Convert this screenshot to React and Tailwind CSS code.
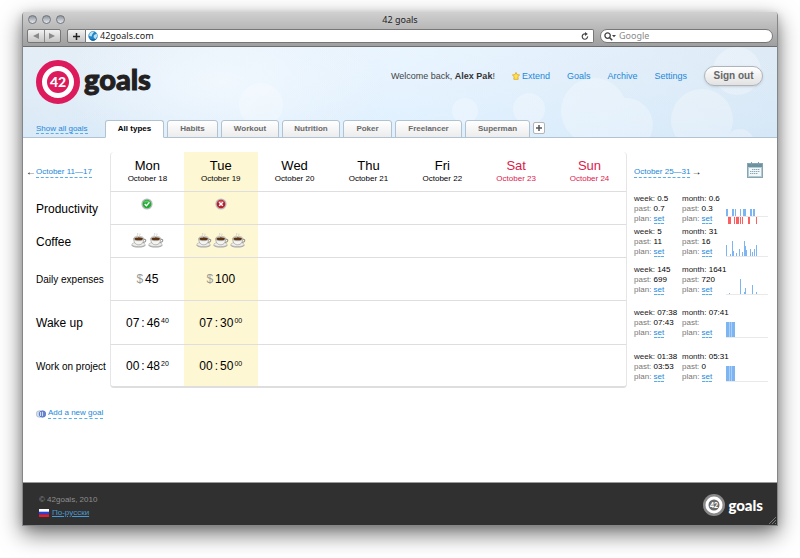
import React from "react";

const days = [
  ["Mon", "October 18"],
  ["Tue", "October 19"],
  ["Wed", "October 20"],
  ["Thu", "October 21"],
  ["Fri", "October 22"],
  ["Sat", "October 23"],
  ["Sun", "October 24"],
];

const tabs = [
  ["All types", "w-[59px]"],
  ["Habits", "w-[51px]"],
  ["Workout", "w-[58px]"],
  ["Nutrition", "w-[58px]"],
  ["Poker", "w-[49px]"],
  ["Freelancer", "w-[67px]"],
  ["Superman", "w-[65px]"],
];

function Link({ children }) {
  return (
    <a href="#" className="border-b border-dashed border-[#5aaee8] text-[#2488d8]">
      {children}
    </a>
  );
}

function Status({ ok }) {
  return (
    <svg className="h-3 w-3" viewBox="0 0 12 12" role="img" aria-label={ok ? "Done" : "Missed"}>
      <circle cx="6" cy="6" r="5.6" fill="#b9b9b9" />
      <circle cx="6" cy="6" r="4.3" fill={ok ? "#1fae32" : "#b81f2c"} />
      <path d="M2.6 4.8a3.6 3.6 0 0 1 6.8 0C7.5 4 4.5 4 2.6 4.8z" fill="#fff" opacity=".3" />
      {ok ? (
        <path d="M3.7 6.1l1.7 1.7 3-3.4" stroke="#fff" strokeWidth="1.4" fill="none" />
      ) : (
        <path d="M4.200 4.200l3.600 3.600M7.800 4.200L4.200 7.800" stroke="#fff" strokeWidth="1.500" fill="none" />
      )}
    </svg>
  );
}

function Cup() {
  return (
    <svg className="h-4 w-4" viewBox="0 0 15 16" aria-hidden="true">
      <ellipse cx="7" cy="13.200" rx="6.800" ry="2.400" fill="#a9a9a7" />
      <ellipse cx="7" cy="12.400" rx="6.600" ry="2.200" fill="#efefed" stroke="#a9a9a7" strokeWidth=".6" />
      <path d="M12 7.500c3-.8 3.300 2.500-.8 3" fill="none" stroke="#9a9996" strokeWidth="1.100" />
      <path d="M2.200 6.600c0 3.600 1.600 6.200 5 6.200s5-2.600 5-6.200z" fill="#f4f4f2" stroke="#999895" strokeWidth=".7" />
      <ellipse cx="7.200" cy="6.600" rx="5" ry="2.100" fill="#e4e3df" stroke="#8c8a86" strokeWidth=".5" />
      <ellipse cx="7.200" cy="6.800" rx="4.200" ry="1.500" fill="#5d3413" />
      <path d="M6 5.300c-2-1.400 1.200-2 0-4.300M8.300 5c-1.200-1.400.8-2 .1-3.300" fill="none" stroke="#cfcfcd" strokeWidth="1" />
    </svg>
  );
}

function Cups({ count }) {
  return (
    <div className="flex justify-center gap-px" role="img" aria-label={count + " cups"}>
      {Array.from({ length: count }, (_, i) => (
        <Cup key={i} />
      ))}
    </div>
  );
}

function Money({ value }) {
  return (
    <span>
      <span className="text-[#9a9a96]">$</span>
      <span className="pl-[2px]">{value}</span>
    </span>
  );
}

function Time({ h, m, s }) {
  return (
    <div className="flex justify-center">
      <span>{h}</span>
      <span className="px-[2px]">:</span>
      <span>{m}</span>
      <span className="pl-px text-[7px] leading-[12px]">{s}</span>
    </div>
  );
}

// Each bar is [x, y, width, height] in a 42x16 box.
const charts = [
  {
    base: 8,
    bars: [[0, 1, 1, 7], [1, 1, 1, 7], [6, 1, 2, 7], [9, 1, 1, 7], [14, 1, 1, 7], [17, 1, 2, 7], [19, 1, 1, 7], [24, 1, 2, 7], [27, 1, 2, 7]],
    red: [[2, 9, 2, 7], [4, 9, 1, 7], [8, 9, 1, 7], [10, 9, 2, 7], [12, 9, 1, 7], [14, 9, 1, 7], [16, 9, 1, 7], [22, 9, 2, 7], [30, 9, 1, 7]],
  },
  {
    base: 15,
    bars: [[0, 4, 1, 11], [4, 13, 1, 2], [6, 0, 1, 15], [7, 10, 1, 5], [10, 12, 1, 3], [13, 8, 1, 7], [16, 11, 1, 4], [18, 0, 1, 15], [19, 5, 1, 10], [20, 9, 1, 6], [24, 8, 1, 7], [26, 11, 1, 4], [28, 8, 1, 7], [30, 4, 1, 11]],
  },
  { base: 15, bars: [[3, 14, 1, 1], [14, 0, 1, 15], [18, 13, 1, 2], [19, 9, 1, 6], [26, 6, 1, 9], [30, 13, 1, 2]] },
  { base: 15, bars: [[0, 0, 1, 15], [1, 0, 1, 15], [2, 0, 1, 15], [4, 0, 1, 15], [6, 0, 2, 15], [8, 0, 1, 15]], solid: true },
  { base: 15, bars: [[0, 0, 1, 15], [1, 0, 1, 15], [2, 0, 1, 15], [4, 0, 1, 15], [6, 0, 2, 15], [8, 0, 1, 15]], solid: true },
];

function Chart({ data }) {
  return (
    <svg className="h-4 w-[42px] shrink-0" viewBox="0 0 42 16" shapeRendering="crispEdges" aria-hidden="true">
      <rect x="0" y={data.base} width="42" height="1" fill="#e9e9e9" />
      {data.solid && <rect x="0" y="0" width="9" height="15" fill="#a9cff8" />}
      {data.bars.map(([x, y, w, h], i) => (
        <rect key={i} x={x} y={y} width={w} height={h} fill="#7db5f2" />
      ))}
      {(data.red || []).map(([x, y, w, h], i) => (
        <rect key={i} x={x} y={y} width={w} height={h} fill="#fb5f5f" />
      ))}
    </svg>
  );
}

const goals = [
  {
    name: "Productivity",
    size: "h-[33px] text-[12px]",
    pad: "pb-[8px]",
    cells: [<Status ok />, <Status />],
    week: ["0.5", "0.7"],
    month: ["0.6", "0.3"],
  },
  {
    name: "Coffee",
    size: "h-[33px] text-[12px]",
    pad: "pb-[2px]",
    cells: [<Cups count={2} />, <Cups count={3} />],
    week: ["5", "11"],
    month: ["31", "16"],
  },
  {
    name: "Daily expenses",
    size: "h-[43px] text-[10px]",
    pad: "",
    cells: [<Money value="45" />, <Money value="100" />],
    week: ["145", "699"],
    month: ["1641", "720"],
  },
  {
    name: "Wake up",
    size: "h-[44px] text-[12px]",
    pad: "",
    cells: [<Time h="07" m="46" s="40" />, <Time h="07" m="30" s="00" />],
    week: ["07:38", "07:43"],
    month: ["07:41", ""],
  },
  {
    name: "Work on project",
    size: "h-[43px] text-[10px]",
    pad: "",
    cells: [<Time h="00" m="48" s="20" />, <Time h="00" m="50" s="00" />],
    week: ["01:38", "03:53"],
    month: ["05:31", "0"],
  },
];

function Stats({ label, values }) {
  return (
    <div className="whitespace-nowrap text-[8px] leading-[10px] text-[#777]">
      <div className="text-[#222]">
        {label}: <span className="text-black">{values[0]}</span>
      </div>
      <div>
        past: <span className="text-black">{values[1]}</span>
      </div>
      <div>
        plan: <Link>set</Link>
      </div>
    </div>
  );
}

function Light() {
  return (
    <span className="h-[9px] w-[9px] rounded-full border border-[#70757d] bg-linear-to-b from-[#8f959e] to-[#e6e9ed]" />
  );
}

function Browser() {
  return (
    <div className="rounded-t-[3px] border-b border-[#6f6f6f] bg-linear-to-b from-[#d0d0d0] to-[#9f9f9f] px-1">
      <div className="grid h-[15px] grid-cols-3 items-center">
        <div className="flex gap-[5px] pl-px">
          <Light />
          <Light />
          <Light />
        </div>
        <h1 className="text-center font-['Noto_Sans',sans-serif] text-[9px] leading-[14px] text-[#222]">42 goals</h1>
      </div>
      <div className="flex h-[19px] items-center pb-[2px] pt-px">
        <div className="mr-[6px] flex h-[14px] w-[34px] shrink-0 divide-x divide-[#888] overflow-hidden rounded-[2px] border border-[#777] bg-linear-to-b from-[#f2f2f2] to-[#c4c4c4]">
          <button aria-label="Back" className="flex flex-1 items-center justify-center">
            <svg className="h-[6px] w-[6px]" viewBox="0 0 6 6"><path d="M6 0v6L0 3z" fill="#8a8a8a" /></svg>
          </button>
          <button aria-label="Forward" className="flex flex-1 items-center justify-center">
            <svg className="h-[6px] w-[6px]" viewBox="0 0 6 6"><path d="M0 0v6l6-3z" fill="#8a8a8a" /></svg>
          </button>
        </div>
        <button aria-label="Add bookmark" className="flex h-[14px] w-[19px] shrink-0 items-center justify-center rounded-l-[2px] border border-[#777] bg-linear-to-b from-[#f2f2f2] to-[#c4c4c4]">
          <svg className="h-[7px] w-[7px]" viewBox="0 0 7 7"><path d="M3.500 0v7M0 3.500h7" stroke="#222" strokeWidth="1.500" /></svg>
        </button>
        <div className="mr-[6px] flex h-[14px] min-w-0 flex-1 items-center rounded-r-[2px] border border-l-0 border-[#777] bg-white pl-[2px] pr-1">
          <svg className="h-[10px] w-[10px] shrink-0" viewBox="0 0 10 10" aria-hidden="true">
            <circle cx="5" cy="5" r="4.700" fill="#2384c4" />
            <path d="M1.500 2.500C3 .8 5 .5 6 1.200L4.500 3 3.500 5.500 1.200 5zM6 4l2.700-1.200.6 2.400-2 3L5.500 6z" fill="#b9e2f5" />
            <path d="M2 8.400a4.700 4.700 0 0 0 6 0z" fill="#0d4f8d" />
          </svg>
          <input aria-label="Address" defaultValue="42goals.com" className="min-w-0 flex-1 bg-transparent pl-[2px] font-['Noto_Sans',sans-serif] text-[9px] leading-[12px] text-[#222] outline-none" />
          <button aria-label="Reload">
            <svg className="h-[8px] w-[8px]" viewBox="0 0 8 8">
              <path d="M6.600 4.400A2.700 2.700 0 1 1 4.500 1.900" fill="none" stroke="#444" strokeWidth="1.200" />
              <path d="M4 0l2.800 2L4 4z" fill="#444" />
            </svg>
          </button>
        </div>
        <div className="flex h-[14px] w-[173px] shrink-0 items-center rounded-full border border-[#777] bg-white pl-[3px]">
          <svg className="h-[9px] w-[12px]" viewBox="0 0 12 9" aria-hidden="true">
            <circle cx="3.600" cy="3.600" r="2.700" fill="none" stroke="#444" strokeWidth="1.300" />
            <path d="M5.500 5.500l2.700 2.800" stroke="#444" strokeWidth="1.600" />
            <path d="M8 3h4l-2 2.300z" fill="#444" />
          </svg>
          <input aria-label="Search" placeholder="Google" className="min-w-0 flex-1 bg-transparent pl-[3px] font-['Noto_Sans',sans-serif] text-[9px] leading-[12px] outline-none placeholder:text-[#8a8a8a]" />
        </div>
      </div>
    </div>
  );
}

function Header() {
  return (
    <header className="relative border-b border-[#b1c2d0] bg-linear-to-r from-[#dde9f4] via-[#e4f2ff] to-[#d6e6f4]">
      <svg className="absolute inset-y-0 right-0 h-full w-[754px]" viewBox="0 0 754 90" preserveAspectRatio="xMaxYMin slice" aria-hidden="true">
        <defs>
          <linearGradient id="glow" x1="0" y1="0" x2="0" y2="1">
            <stop offset="0" stopColor="#fff" stopOpacity=".2" />
            <stop offset="1" stopColor="#d4ebff" stopOpacity=".3" />
          </linearGradient>
          <radialGradient id="shine">
            <stop offset="0" stopColor="#f4faff" stopOpacity=".8" />
            <stop offset="1" stopColor="#f4faff" stopOpacity="0" />
          </radialGradient>
        </defs>
        <rect x="0" y="0" width="754" height="90" fill="url(#glow)" />
        <ellipse cx="200" cy="35" rx="160" ry="75" fill="url(#shine)" />
        <g fill="#fff" opacity=".28">
          <circle cx="571" cy="64" r="33" />
          <circle cx="603" cy="78" r="27" />
          <circle cx="679" cy="73" r="31" />
          <circle cx="714" cy="24" r="24" />
          <circle cx="717" cy="96" r="14" />
          <circle cx="506" cy="62" r="16" />
          <circle cx="442" cy="64" r="13" />
          <circle cx="238" cy="58" r="22" />
        </g>
      </svg>
      <div className="relative flex h-[73px] items-start justify-between pl-[13px] pr-[14px] pt-[13px]">
        <a href="#" className="flex items-center">
          <svg className="h-11 w-11" viewBox="0 0 44 44" aria-hidden="true">
            <circle cx="22" cy="22" r="19" fill="#fff" stroke="#dc1a5c" strokeWidth="6" />
            <circle cx="22" cy="22" r="11" fill="#dc1a5c" />
            <text x="22" y="27" textAnchor="middle" fontFamily="Lato, sans-serif" fontWeight="900" fontSize="14" fill="#fff">42</text>
          </svg>
          <span className="pb-[7px] pl-[4px] font-['Lato',sans-serif] text-[29px] font-black leading-[36px] text-[#222021] [-webkit-text-stroke:1px_#222021]">goals</span>
        </a>
        <nav className="flex items-center gap-[17px] pt-[6px] text-[9px] leading-[20px] text-[#2488d8]">
          <span className="text-[#444]">
            Welcome back, <b className="text-[#333]">Alex Pak</b>!
          </span>
          <a href="#" className="flex items-center gap-[2px]">
            <svg className="h-[8px] w-[8px]" viewBox="0 0 8 8" aria-hidden="true">
              <path d="M4 .4l1.100 2.200 2.500.4-1.800 1.700.4 2.600H1.800l.4-2.600L.4 3l2.500-.4z" fill="#ffe252" stroke="#e0a21a" strokeWidth=".8" />
            </svg>
            Extend
          </a>
          <a href="#">Goals</a>
          <a href="#">Archive</a>
          <a href="#">Settings</a>
          <button className="h-[20px] w-[59px] rounded-full border border-[#aeb4ba] bg-linear-to-b from-white to-[#e2e2e2] text-[10px] font-bold leading-[18px] text-[#666] shadow-sm">
            Sign out
          </button>
        </nav>
      </div>
      <div className="relative -mb-px flex items-end pl-[13px]">
        <div className="w-[69px] pb-[4px] text-[8px] leading-[10px]">
          <Link>Show all goals</Link>
        </div>
        <div className="flex items-end gap-[3px]" role="tablist">
          {tabs.map(([name, width], i) => (
            <button
              key={name}
              role="tab"
              aria-selected={i === 0}
              className={
                "h-[18px] rounded-t-[3px] border text-[8px] font-bold leading-[16px] border-[#b1c2d0] " +
                width +
                (i === 0 ? " border-b-white bg-white text-black" : " bg-linear-to-b from-white to-[#ececec] text-[#6a6a6a]")
              }
            >
              {name}
            </button>
          ))}
          <button aria-label="Add type" className="mb-[4px] flex h-3 w-3 items-center justify-center rounded-[2px] border border-[#b4b4b4] bg-white">
            <svg className="h-[6px] w-[6px]" viewBox="0 0 6 6"><path d="M3 0v6M0 3h6" stroke="#555" strokeWidth="1.500" /></svg>
          </button>
        </div>
      </div>
    </header>
  );
}

function Calendar() {
  return (
    <svg className="h-4 w-4" viewBox="0 0 16 16" aria-hidden="true">
      <rect x=".5" y="1.500" width="15" height="14" fill="#b4cbd3" stroke="#86a5b0" />
      <rect x="1" y="2" width="14" height="3" fill="#6d929f" />
      <rect x="2" y="6" width="12" height="8" fill="#f2f8fa" />
      <path d="M5 7.500h8M3 9.500h10M3 11.500h8" stroke="#8aa9b4" strokeDasharray="1.400 .6" />
      <path d="M4.500 0v3M11.500 0v3" stroke="#7b9ca8" />
    </svg>
  );
}

function Board() {
  return (
    <table className="w-full table-fixed border-separate border-spacing-0 text-black">
      <colgroup>
        <col className="w-[87px]" />
        {days.map(([d]) => (
          <col key={d} />
        ))}
        <col className="w-[150px]" />
      </colgroup>
      <thead>
        <tr className="h-[40px]">
          <th className="whitespace-nowrap pl-[3px] text-left text-[8px] font-normal leading-[10px]">
            <div className="flex">
              <span className="w-[10px] text-[10px]">←</span>
              <Link>October 11—17</Link>
            </div>
          </th>
          {days.map(([d, date], i) => (
            <th
              key={d}
              className={
                "border-b border-[#dedede] pb-[2px] font-normal " +
                (i === 0 ? "rounded-tl-[4px] border-l border-l-[#e6e6e6] " : "") +
                (i === 6 ? "rounded-tr-[4px] border-r border-r-[#e6e6e6] " : "") +
                (i === 1 ? "bg-[#fef7d3] " : "") +
                (i > 4 ? "text-[#dc1a4c]" : "")
              }
            >
              <div className="text-[13px] leading-[16px]">{d}</div>
              <div className="text-[8px] leading-[10px]">{date}</div>
            </th>
          ))}
          <th className="pl-[7px] pr-[14px] text-[8px] font-normal leading-[10px]">
            <div className="flex items-center justify-between">
              <span className="flex gap-px">
                <Link>October 25—31</Link>
                <span className="text-[10px]">→</span>
              </span>
              <button aria-label="Calendar" className="pb-[4px]">
                <Calendar />
              </button>
            </div>
          </th>
        </tr>
      </thead>
      <tbody>
        {goals.map((g, r) => (
          <tr key={g.name}>
            <th className={"whitespace-nowrap p-0 pl-[13px] text-left font-normal leading-[16px] " + g.size}>{g.name}</th>
            {days.map(([d], i) => (
              <td
                key={d}
                className={
                  "border-[#dedede] p-0 text-center text-[12px] leading-[16px] " +
                  (r === 4 ? "border-b-2 " : "border-b ") +
                  (i === 0 ? "border-l border-l-[#e6e6e6] " : "") +
                  (i === 6 ? "border-r border-r-[#e6e6e6] " : "") +
                  (r === 4 && i === 0 ? "rounded-bl-[4px] " : "") +
                  (r === 4 && i === 6 ? "rounded-br-[4px] " : "") +
                  (i === 1 ? "bg-[#fef7d3] " : "") +
                  g.pad
                }
              >
                <div className="flex justify-center">{g.cells[i]}</div>
              </td>
            ))}
            <td className="p-0 pl-[7px]">
              <div className="grid grid-cols-[48px_44px_42px] items-end">
                <Stats label="week" values={g.week} />
                <Stats label="month" values={g.month} />
                <Chart data={charts[r]} />
              </div>
            </td>
          </tr>
        ))}
      </tbody>
    </table>
  );
}

function Footer() {
  return (
    <footer className="relative flex items-center justify-between border-t border-[#9a9a9a] bg-[#303030] pb-[7px] pl-4 pr-[14px] pt-[9px] text-[8px] text-[#8f8f8f]">
      <div>
        <div className="leading-[16px]">© 42goals, 2010</div>
        <a href="#" className="flex items-center gap-[3px] leading-[10px] text-[#4a9ad0] underline">
          <svg className="h-[8px] w-[10px]" viewBox="0 0 10 8" aria-hidden="true">
            <rect width="10" height="3" fill="#fff" />
            <rect y="2.700" width="10" height="2.800" fill="#2a3fd8" />
            <rect y="5.400" width="10" height="2.600" fill="#e31e2a" />
          </svg>
          По-русски
        </a>
      </div>
      <a href="#" className="flex items-center gap-[3px]">
        <svg className="h-[22px] w-[22px]" viewBox="0 0 22 22" aria-hidden="true">
          <circle cx="11" cy="11" r="11" fill="#8a8a8a" />
          <circle cx="11" cy="11" r="7" fill="#6b6b6b" stroke="#fff" strokeWidth="3" />
          <text x="11" y="13.500" textAnchor="middle" fontFamily="Lato, sans-serif" fontWeight="900" fontSize="7" fill="#fff">42</text>
        </svg>
        <span className="font-['Lato',sans-serif] text-[15px] font-black leading-[20px] text-white">goals</span>
      </a>
      <svg className="absolute bottom-px right-px h-[7px] w-[7px]" viewBox="0 0 7 7" aria-hidden="true">
        <path d="M0 7l7-7M3 7l4-4M6 7l1-1" stroke="#8d8d8d" strokeWidth=".8" />
      </svg>
    </footer>
  );
}

export default function App() {
  return (
    <div className="flex min-h-screen flex-col bg-white px-[22px] pb-8 pt-3 font-['Liberation_Sans',Arial,sans-serif]">
      <div className="flex flex-1 flex-col rounded-t-[4px] border-x border-b border-[#83878a] bg-white shadow-[0_8px_22px_rgba(0,0,0,0.55),0_2px_8px_rgba(0,0,0,0.15)]">
        <Browser />
        <Header />
        <main className="flex-1 pt-[14px]">
          <Board />
          <a href="#" className="mt-[20px] inline-flex items-center gap-[2px] pl-[13px] text-[8px] leading-[10px]">
            <svg className="h-[8px] w-[10px]" viewBox="0 0 10 8" aria-hidden="true">
              <circle cx="3.500" cy="4" r="3.300" fill="#d3dcea" stroke="#9fb0c8" strokeWidth=".6" />
              <circle cx="6.500" cy="4" r="3.300" fill="#6484d8" stroke="#4c68b8" strokeWidth=".6" />
              <path d="M4.500 2v4M6.500 1.800v4.400" stroke="#e9effc" strokeWidth=".8" />
            </svg>
            <span className="border-b border-dashed border-[#5aaee8] text-[#2488d8]">Add a new goal</span>
          </a>
        </main>
        <Footer />
      </div>
    </div>
  );
}
